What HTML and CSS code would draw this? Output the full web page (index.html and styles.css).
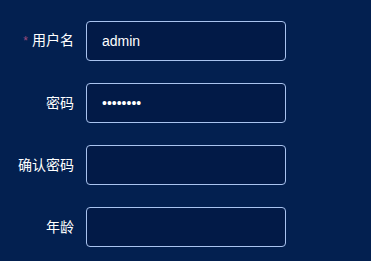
FILE: index.html
```html
<!DOCTYPE html>
<html lang="zh">
<head>
<meta charset="utf-8">
<link rel="stylesheet" href="styles.css">
</head>
<body>
<form class="form">
  <div class="item">
    <label class="label"><span class="req">*</span>用户名</label>
    <input class="input" type="text" value="admin">
  </div>
  <div class="item">
    <label class="label">密码</label>
    <input class="input" type="password" value="12345678">
  </div>
  <div class="item">
    <label class="label">确认密码</label>
    <input class="input" type="password" value="">
  </div>
  <div class="item">
    <label class="label">年龄</label>
    <input class="input" type="text" value="">
  </div>
</form>
</body>
</html>
```
FILE: styles.css
```css
html, body {
  margin: 0;
  padding: 0;
  background: #032050;
  width: 371px;
  height: 261px;
  overflow: hidden;
}
.form {
  padding-top: 20px;
  display: flex;
  flex-direction: column;
  gap: 22px;
}
.item {
  display: flex;
  align-items: center;
}
.label {
  width: 86px;
  box-sizing: border-box;
  padding-right: 12px;
  text-align: right;
  color: #ffffff;
  font-family: "Liberation Sans", "Noto Sans CJK SC", sans-serif;
  font-size: 14px;
  line-height: 40px;
}
.req {
  color: #9c4b7e;
  margin-right: 4px;
  font-size: 12px;
}
.input {
  width: 200px;
  height: 40px;
  box-sizing: border-box;
  border: 1px solid #a9c3ef;
  border-radius: 4px;
  background: #021a47;
  color: #ffffff;
  padding: 0 15px;
  margin: 0;
  font-family: "Liberation Sans", "Noto Sans CJK SC", sans-serif;
  font-size: 14px;
  outline: none;
}
```
